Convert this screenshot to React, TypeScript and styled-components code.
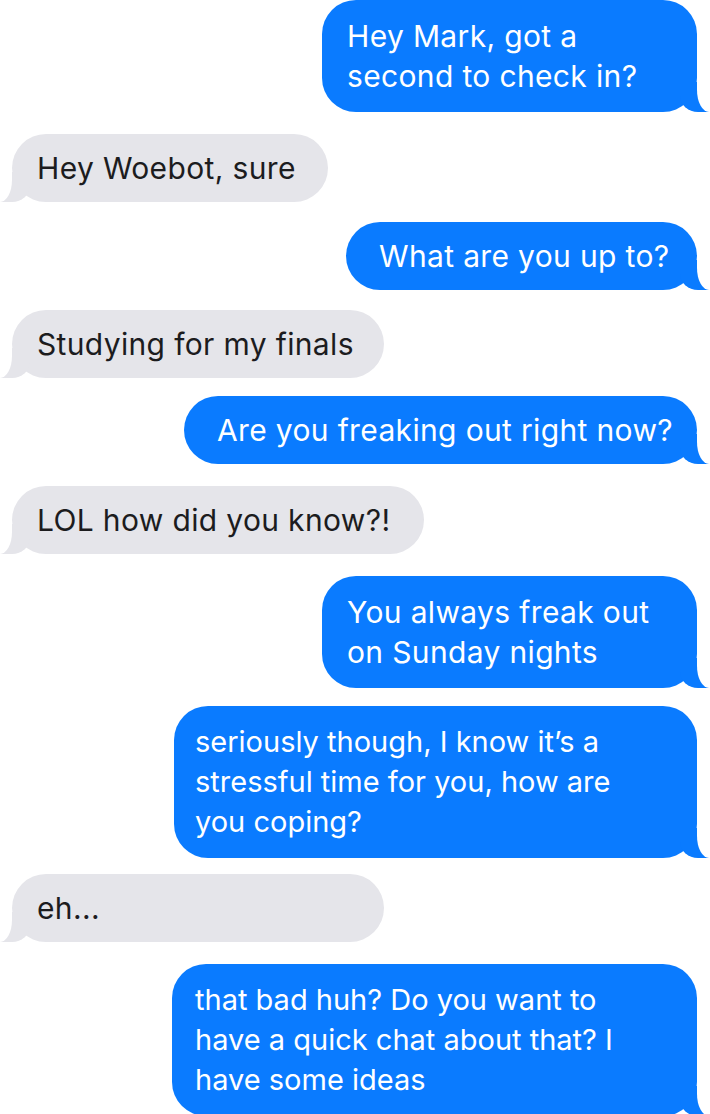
import styled, { createGlobalStyle } from "styled-components";

const GlobalStyle = createGlobalStyle`
  html, body {
    margin: 0;
    padding: 0;
    background: #ffffff;
  }
  body {
    font-family: Inter, "Noto Sans", "Liberation Sans", sans-serif;
    -webkit-font-smoothing: antialiased;
  }
`;

const BLUE = "#0a7bff";
const GRAY = "#e5e5ea";

const Thread = styled.div`
  display: flex;
  flex-direction: column;
  width: 710px;
  height: 1114px;
  overflow: hidden;
`;

const Row = styled.div<{ $out: boolean; $space: number }>`
  display: flex;
  justify-content: ${(p) => (p.$out ? "flex-end" : "flex-start")};
  margin-top: ${(p) => p.$space}px;
  padding: ${(p) => (p.$out ? "0 13px 0 0" : "0 0 0 12px")};
`;

const Bubble = styled.div<{
  $out: boolean;
  $width: number;
  $inset: number;
  $multi: boolean;
  $tight: boolean;
}>`
  position: relative;
  box-sizing: border-box;
  width: ${(p) => p.$width}px;
  padding: ${(p) => (p.$multi ? "16px" : "14px")} 20px
    ${(p) => (p.$multi ? "16px" : "14px")} ${(p) => p.$inset}px;
  border-radius: 34px;
  background: ${(p) => (p.$out ? BLUE : GRAY)};
  color: ${(p) => (p.$out ? "#ffffff" : "#1c1c1e")};
  font-size: ${(p) => (p.$tight ? "29px" : "30px")};
  letter-spacing: ${(p) => (p.$tight ? "0" : "0.35px")};
  line-height: 40px;
  white-space: nowrap;

  /* the tail: a coloured corner, carved by a white one */
  &::before {
    content: "";
    position: absolute;
    bottom: 0;
    ${(p) => (p.$out ? "right: -13px;" : "left: -12px;")}
    width: 30px;
    height: 30px;
    background: ${(p) => (p.$out ? BLUE : GRAY)};
    ${(p) =>
      p.$out
        ? "border-bottom-left-radius: 18px 16px;"
        : "border-bottom-right-radius: 18px 16px;"}
  }

  &::after {
    content: "";
    position: absolute;
    bottom: 0;
    ${(p) => (p.$out ? "right: -25px;" : "left: -24px;")}
    width: ${(p) => (p.$out ? "25px" : "24px")};
    height: 32px;
    background: #ffffff;
    ${(p) =>
      p.$out
        ? "border-bottom-left-radius: 12px 22px;"
        : "border-bottom-right-radius: 12px 22px;"}
  }
`;

const Text = styled.span`
  position: relative;
  z-index: 1;
`;

interface IMessage {
  out: boolean;
  lines: string[];
  width: number;
  inset: number;
  space: number;
  tight?: boolean;
}

const messages: IMessage[] = [
  { out: true, lines: ["Hey Mark, got a", "second to check in?"], width: 375, inset: 25, space: 0 },
  { out: false, lines: ["Hey Woebot, sure"], width: 316, inset: 25, space: 22 },
  { out: true, lines: ["What are you up to?"], width: 351, inset: 33, space: 20 },
  { out: false, lines: ["Studying for my finals"], width: 372, inset: 25, space: 20 },
  { out: true, lines: ["Are you freaking out right now?"], width: 513, inset: 33, space: 18 },
  { out: false, lines: ["LOL how did you know?!"], width: 412, inset: 25, space: 22 },
  { out: true, lines: ["You always freak out", "on Sunday nights"], width: 375, inset: 25, space: 22 },
  {
    out: true,
    lines: ["seriously though, I know it\u2019s a", "stressful time for you, how are", "you coping?"],
    width: 523,
    inset: 21,
    space: 18,
    tight: true,
  },
  { out: false, lines: ["eh..."], width: 372, inset: 25, space: 16 },
  {
    out: true,
    lines: ["that bad huh? Do you want to", "have a quick chat about that? I", "have some ideas"],
    width: 525,
    inset: 23,
    space: 22,
    tight: true,
  },
];

const App = () => {
  return (
    <>
      <GlobalStyle />
      <Thread>
        {messages.map((m, i) => (
          <Row key={i} $out={m.out} $space={m.space}>
            <Bubble
              $out={m.out}
              $width={m.width}
              $inset={m.inset}
              $multi={m.lines.length > 1}
              $tight={!!m.tight}
            >
              <Text>
                {m.lines.map((line, j) => (
                  <span key={j}>
                    {j > 0 && <br />}
                    {line}
                  </span>
                ))}
              </Text>
            </Bubble>
          </Row>
        ))}
      </Thread>
    </>
  );
};

export default App;
